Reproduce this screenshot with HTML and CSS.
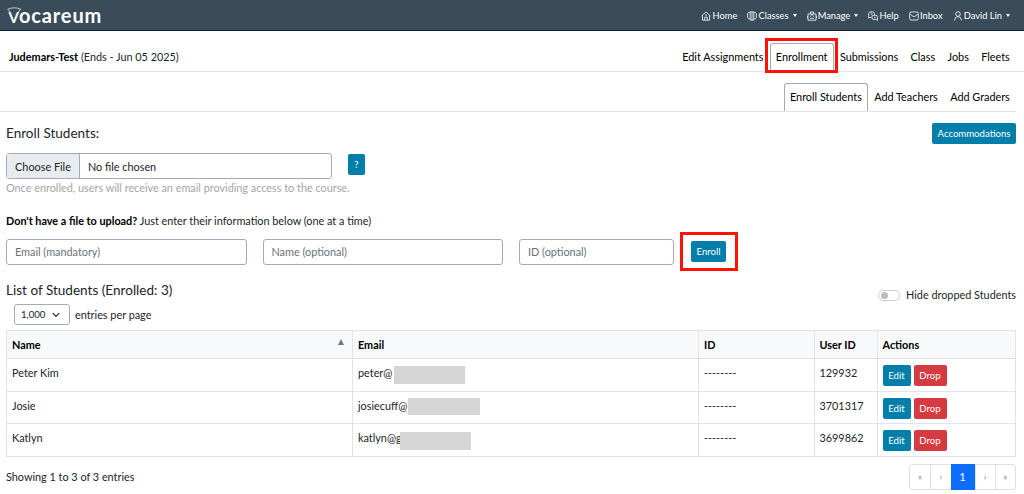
FILE: index.html
```html
<!DOCTYPE html>
<html lang="en">
<head>
<meta charset="utf-8">
<title>Vocareum - Enroll Students</title>
<link rel="stylesheet" href="styles.css">
</head>
<body>
<header class="topbar">
  <a class="logo"><svg class="logo-arc" viewBox="0 0 15 6"><path d="M.5 2.400Q7.200-.8 14 2.400M1.200 2.400 3 5M13.300 2.400 11.500 5"/></svg><span class="logo-v">V</span><span class="logo-rest">ocareum</span></a>
  <nav class="topnav">
    <a><svg viewBox="0 0 10 10"><path d="M.5 5 5 .9 9.500 5M1.500 4.300V9.200h7V4.300M3.700 9V6.200h2.600V9M4 4h2"/></svg>Home</a>
    <a><svg viewBox="0 0 10 10"><path d="M3.200.8h3.600v8.400H3.200zM3 1.800C1.500 1.200.6 1.800.6 3v3.500c0 1 .9 1.600 2.400 1.300M7 1.800c1.500-.6 2.400 0 2.400 1.200v3.500c0 1-.9 1.600-2.400 1.300M5 1v8"/></svg>Classes<i class="caret"></i></a>
    <a><svg viewBox="0 0 10 10"><path d="M1 3h8v6.200H1zM3.300 3V1h3.400v2M.4 5v2.300M9.600 5v2.300M3 5.200h1M6 5.200h1M3 7.300h4M5 3v2"/></svg>Manage<i class="caret"></i></a>
    <a><svg viewBox="0 0 10 10"><path d="M3.200 6.500H1.400L.7 7.200V2.800Q.7.8 2.800.8h1.500q2.200 0 2.200 2v1M2.700 2.600q.9-1 1.500 0 .2.7-.8 1.100M5.200 4.300H8q1.400 0 1.400 1.400v3.600L8.200 8.400H5.200Q4 8.400 4 7V5.700q0-1.400 1.200-1.400M6 6.300h1.500"/></svg>Help</a>
    <a><svg viewBox="0 0 10 10"><path d="M2 1h6q1.300 0 1.300 1.300v5.400Q9.300 9 8 9H2Q.7 9 .7 7.700V2.300Q.7 1 2 1M1.200 3.200 4 5.300q1 .6 2 0l2.800-2.100"/></svg>Inbox</a>
    <a><svg viewBox="0 0 10 10"><circle cx="5" cy="3" r="2.300"/><path d="M1.500 9.500Q1.800 5.700 5 5.500q3.200.2 3.500 4"/></svg>David Lin<i class="caret"></i></a>
  </nav>
</header>
<div class="coursebar">
  <div class="course"><b>Judemars-Test</b> (Ends - Jun 05 2025)</div>
  <nav class="tabs">
    <a>Edit Assignments</a>
    <a class="active marked">Enrollment</a>
    <a>Submissions</a><a>Class</a><a>Jobs</a><a>Fleets</a>
  </nav>
</div>
<nav class="subtabs tabs"><a class="active">Enroll Students</a><a>Add Teachers</a><a>Add Graders</a></nav>
<main>
  <div class="title-row"><h1>Enroll Students:</h1><button class="btn">Accommodations</button></div>
  <div class="file-row">
    <div class="file"><span class="choose">Choose File</span><span class="filename">No file chosen</span></div>
    <button class="btn help">?</button>
  </div>
  <p class="hint">Once enrolled, users will receive an email providing access to the course.</p>
  <p class="manual"><b>Don't have a file to upload?</b> Just enter their information below (one at a time)</p>
  <form class="entry">
    <input placeholder="Email (mandatory)"><input placeholder="Name (optional)"><input class="id" placeholder="ID (optional)">
    <div class="submit"><button class="btn" type="button">Enroll</button></div>
  </form>
  <div class="list-head">
    <div>
      <h2>List of Students (Enrolled: 3)</h2>
      <div class="perpage"><span class="select">1,000<svg viewBox="0 0 8 6"><path d="M.8 1.200 4 4.500 7.200 1.200"/></svg></span><span>entries per page</span></div>
    </div>
    <label class="toggle"><span class="switch"></span>Hide dropped Students</label>
  </div>
  <table>
    <colgroup><col class="c1"><col class="c2"><col class="c3"><col class="c4"><col class="c5"></colgroup>
    <thead><tr><th><span class="sort">Name<i></i></span></th><th>Email</th><th>ID</th><th>User ID</th><th>Actions</th></tr></thead>
    <tbody>
      <tr><td>Peter Kim</td><td class="mail">peter@<i class="mask m1"></i></td><td>--------</td><td>129932</td><td class="act"><button class="btn">Edit</button><button class="btn drop">Drop</button></td></tr>
      <tr><td>Josie</td><td class="mail">josiecuff@<i class="mask m2"></i></td><td>--------</td><td>3701317</td><td class="act"><button class="btn">Edit</button><button class="btn drop">Drop</button></td></tr>
      <tr><td>Katlyn</td><td class="mail">katlyn@g<i class="mask m3"></i></td><td>--------</td><td>3699862</td><td class="act"><button class="btn">Edit</button><button class="btn drop">Drop</button></td></tr>
    </tbody>
  </table>
  <div class="foot"><span>Showing 1 to 3 of 3 entries</span><div class="pager"><a>«</a><a>‹</a><a class="on">1</a><a>›</a><a>»</a></div></div>
</main>
</body>
</html>
```
FILE: styles.css
```css
*, *::before, *::after { box-sizing: border-box; }
body { margin: 0; height: 494px; overflow: hidden; background: #fff; color: #212529; font: 10.850px/16px Lato, "Liberation Sans", sans-serif; }
button, input { font: inherit; margin: 0; }
svg { fill: none; stroke: currentColor; stroke-width: .8; }
h1, h2, p { margin: 0; font-weight: 400; }

.topbar { height: 31px; background: #3a4c59; border-bottom: 1px solid #0b2239; display: flex; align-items: center; justify-content: space-between; padding: 0 14px 0 7px; color: #fff; }
.logo { position: relative; display: flex; align-items: baseline; font-weight: 700; line-height: 20px; padding-top: 2px; }
.logo-v { font-size: 15px; width: 12px; padding-left: 1.500px; }
.logo-rest { font-size: 20px; letter-spacing: .85px; }
.logo-arc { position: absolute; left: 0; top: 4px; width: 15px; height: 6px; stroke-width: .7; }
.topnav { display: flex; font-size: 9.300px; gap: 10px; padding-top: 1px; }
.topnav a { display: flex; align-items: center; gap: 1.200px; white-space: nowrap; }
.topnav svg { width: 10px; height: 10px; }
.caret { border: 2.500px solid transparent; border-top: 3px solid #fff; border-bottom: 0; margin-left: 2.800px; }

.coursebar { height: 41px; border-bottom: 1px solid #e3e5e8; display: flex; justify-content: space-between; align-items: center; padding: 0 8px 0 9px; color: #000; }
.course { align-self: flex-start; padding-top: 18px; color: #212529; }
.course b { color: #000; }
.tabs { display: flex; align-self: flex-end; justify-content: flex-end; color: #000; }
.tabs a { height: 28px; padding: 5px 5.200px 0; border: 1px solid transparent; border-bottom: 0; border-radius: 3px 3px 0 0; position: relative; white-space: nowrap; }
.tabs .active { border-color: #a3abbb; }
.marked::after { content: ""; position: absolute; left: -6px; top: -6px; width: 73px; height: 35px; border: 3px solid #fe1200; }
.subtabs { height: 40px; margin: 0 8px 0 0; border-bottom: 1px solid #e3e5e8; align-items: flex-end; }

main { padding: 0 8px 0 6px; }
.title-row { display: flex; justify-content: space-between; height: 41px; padding-top: 11px; }
h1, h2 { font-size: 13.550px; line-height: 21px; }
.btn { height: 21px; padding: 0 5.500px; border: 0; border-radius: 2px; background: #027eaa; color: #fff; font-size: 9.600px; line-height: 21px; }
.file-row { display: flex; gap: 16px; }
.file { display: flex; width: 326px; height: 26px; margin-bottom: 1px; border: 1px solid #a3abbb; border-radius: 3px; line-height: 25px; }
.choose { width: 73px; text-align: center; background: #e9ecef; border-right: 1px solid #a3abbb; }
.filename { padding-left: 8px; }
.help { width: 17px; padding: 0; margin-top: 1px; }
.hint { color: #a5a5a5; margin-bottom: 17px; }
.manual { margin-bottom: 10px; }
.manual b { color: #000; }
.entry { display: flex; gap: 16px; height: 27px; }
.entry input { width: 240.500px; height: 26px; border: 1px solid #a3abbb; border-radius: 3px; padding: 0 8px 2px; }
.entry input::placeholder { color: #67727d; opacity: 1; }
.entry .id { width: 155px; }
.submit { width: 58px; height: 39px; margin: -7px 0 0 -10.500px; border: 3px solid #fe1200; display: flex; align-items: center; justify-content: center; }
.list-head { display: flex; justify-content: space-between; height: 64px; padding-top: 13px; }
.list-head h2 { padding-top: 1px; line-height: 20px; }
.perpage { display: flex; align-items: center; gap: 5px; padding-left: 8px; margin-top: 4px; }
.select { width: 56px; height: 21px; border: 1px solid #a3abbb; border-radius: 3px; padding: 0 9px 0 6px; display: flex; align-items: center; justify-content: space-between; font-size: 9.600px; }
.select svg { width: 8px; height: 6px; stroke-width: 1.200; }
.toggle { display: flex; align-items: center; gap: 6px; height: 16px; margin-top: 8px; }
.switch { width: 22px; height: 11px; border: 1px solid #ccc; border-radius: 6px; padding: 1px 2px; }
.switch::before { content: ""; display: block; width: 7px; height: 7px; border-radius: 50%; background: #bbb; }

table { width: 1010px; table-layout: fixed; border-collapse: collapse; }
.c1 { width: 346px; } .c2 { width: 346px; } .c3 { width: 115.500px; } .c4 { width: 63px; } .c5 { width: 138.500px; }
th, td { border: 1px solid #e0e4e8; padding: 0 5px; text-align: left; vertical-align: top; }
th { height: 28px; background: #f8f9fb; color: #000; line-height: 27px; }
td { height: 32.500px; padding-top: 6px; line-height: 15px; }
.sort { display: flex; justify-content: space-between; }
.sort i { border: 3px solid transparent; border-bottom: 6px solid #777; border-top: 0; height: 0; margin: 8px 3px 0 0; }
.mail { position: relative; }
.mask { position: absolute; width: 71.500px; height: 17.500px; background: #d5d5d5; }
.m1 { left: 40.500px; top: 7px; } .m2 { left: 55px; top: 6px; } .m3 { left: 46.500px; top: 8px; }
.act { padding: 6px 5px 0; font-size: 0; line-height: 0; }
.act .btn { width: 28px; padding: 0; }
.act .drop { background: #d53c41; width: 33px; margin-left: 3px; }
.foot { display: flex; justify-content: space-between; padding-top: 7px; }
.foot > span { padding-top: 5px; }
.pager { display: flex; height: 26px; line-height: 24px; border: 1px solid #dee2e6; border-radius: 3px; color: #888; font-size: 9.600px; text-align: center; }
.pager a { width: 20.250px; border-left: 1px solid #dee2e6; }
.pager a:first-child { border-left: 0; }
.pager .on { width: 24px; margin: -1px 0; line-height: 26px; border: 0; background: #0d6efd; color: #fff; font-size: 11px; }
```
